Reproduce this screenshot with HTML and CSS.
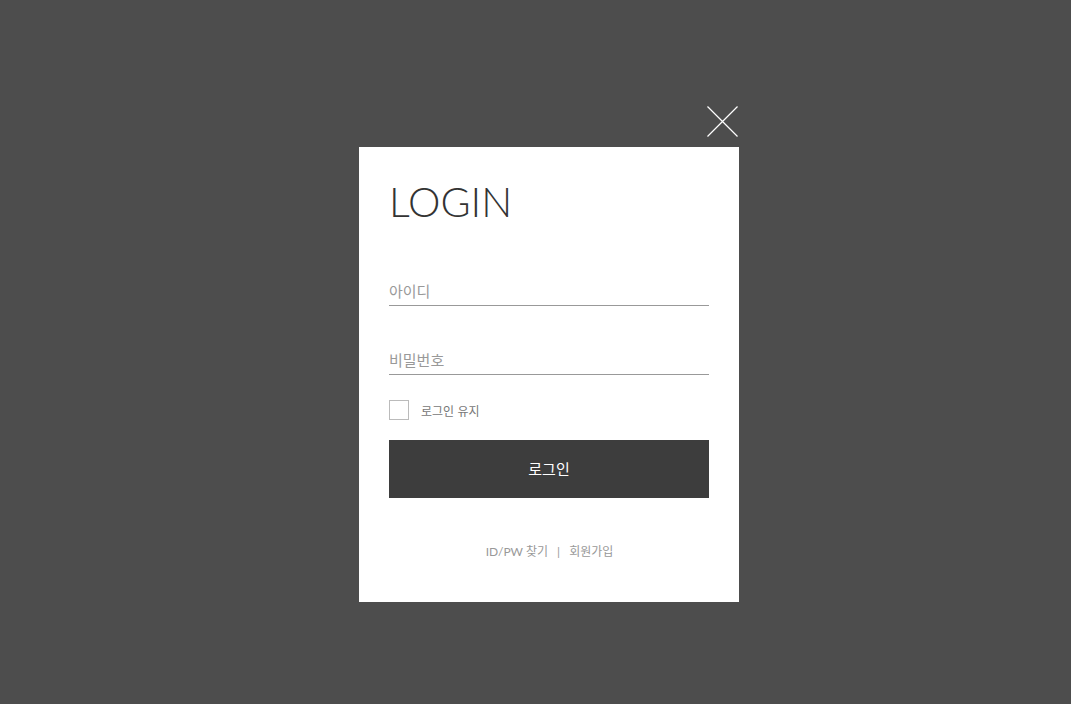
FILE: index.html
```html
<!DOCTYPE html>
<html lang="ko">
<head>
    <meta charset="UTF-8">
    <meta name="viewport" content="width=device-width, initial-scale=1.0">
    <title>LOGIN</title>
    <link rel="stylesheet" href="styles.css">
</head>
<body>
    <div class="login-wrap">
        <button type="button" class="close-btn" aria-label="닫기">
            <svg width="32" height="32" viewBox="0 0 32 32">
                <path d="M0.5 0.5 L31.5 31.5 M31.5 0.5 L0.5 31.5" stroke="#fff" stroke-width="1.3" fill="none"/>
            </svg>
        </button>
        <div class="login-box">
            <h1>LOGIN</h1>
            <form id="formLogin">
                <input type="text" class="field" placeholder="아이디">
                <input type="password" class="field" placeholder="비밀번호">
                <label class="keep">
                    <input type="checkbox" class="check">
                    <span>로그인 유지</span>
                </label>
                <button type="submit" class="button">로그인</button>
            </form>
            <div class="links">
                <a href="#">ID/PW 찾기</a>
                <span class="bar">|</span>
                <a href="#">회원가입</a>
            </div>
        </div>
    </div>
</body>
</html>
```

FILE: styles.css
```css
body {
    font-family: Lato, "Noto Sans CJK KR", sans-serif;
    background-color: #4d4d4d;
    margin: 0;
    padding: 106px 0 0 359px;
    height: 100vh;
    box-sizing: border-box;
}

.login-wrap {
    width: 380px;
    display: flex;
    flex-direction: column;
}

.close-btn {
    align-self: flex-end;
    width: 31px;
    height: 31px;
    margin-right: 1px;
    margin-bottom: 10px;
    padding: 0;
    border: none;
    background: none;
    cursor: pointer;
}

.close-btn svg {
    display: block;
    width: 31px;
    height: 31px;
}

.login-box {
    background-color: white;
    padding: 30px 30px 39px;
}

.login-box h1 {
    font-family: Lato, sans-serif;
    font-weight: 300;
    font-size: 41px;
    line-height: 50px;
    color: #333;
    margin: 0 0 43px;
}

.field {
    display: block;
    width: 100%;
    height: 36px;
    box-sizing: border-box;
    padding: 5px 0 0;
    border: none;
    border-bottom: 1px solid #999;
    font-family: "Noto Sans CJK KR", sans-serif;
    font-size: 15px;
    color: #333;
    outline: none;
}

.field::placeholder {
    color: #999;
}

.field + .field {
    margin-top: 33px;
}

.keep {
    display: flex;
    align-items: center;
    gap: 12px;
    margin-top: 25px;
    font-family: "Noto Sans CJK KR", sans-serif;
    font-size: 12px;
    color: #777;
    cursor: pointer;
}

.check {
    appearance: none;
    width: 20px;
    height: 20px;
    margin: 0;
    border: 1px solid #bbb;
    box-sizing: border-box;
}

.button {
    display: block;
    width: 100%;
    height: 58px;
    margin-top: 20px;
    padding: 0 0 2px;
    background-color: #3d3d3d;
    color: white;
    border: none;
    font-family: "Noto Sans CJK KR", sans-serif;
    font-size: 15px;
    cursor: pointer;
}

.links {
    margin-top: 43px;
    padding-left: 1px;
    text-align: center;
    font-size: 12px;
    line-height: 22px;
    color: #999;
}

.links a {
    color: #999;
    text-decoration: none;
}

.links .bar {
    margin: 0 6px;
}
```
